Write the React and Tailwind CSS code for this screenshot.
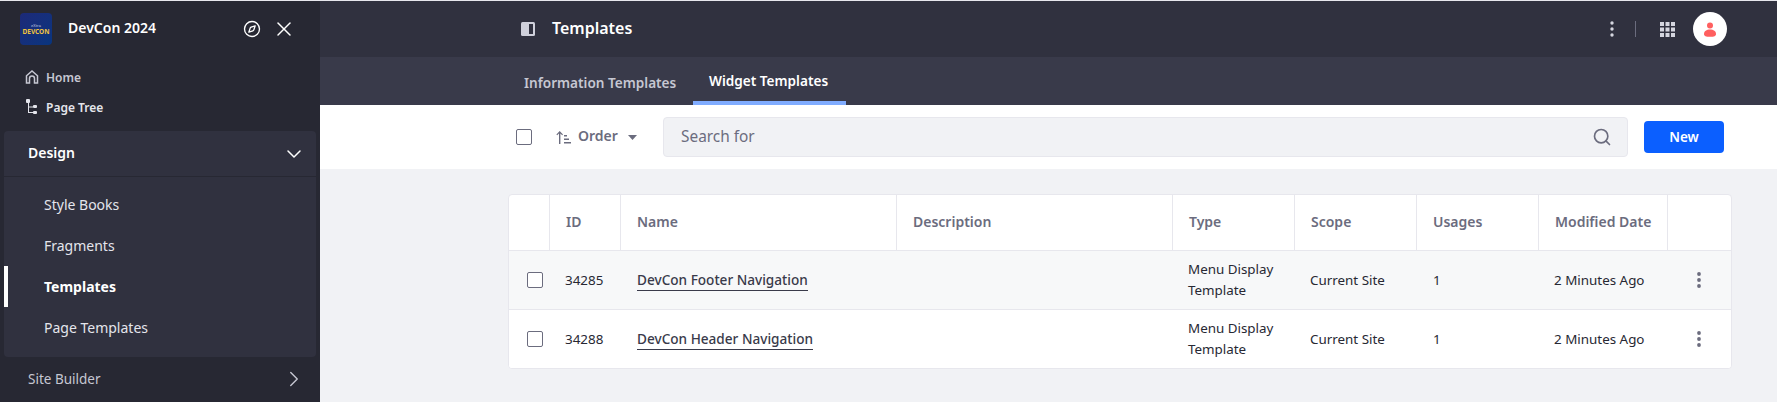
import { X, Compass, ChevronDown, ChevronRight, Search } from 'lucide-react';

const font = "font-['Noto_Sans',sans-serif]";

const columns = 'grid-cols-[41px_71px_276px_276px_122px_122px_122px_129px_63px]';

const rows = [
  { id: '34285', name: 'DevCon Footer Navigation', bg: 'bg-[#f7f8f9]', height: 'h-[59px] border-b border-[#e7e7ed]' },
  { id: '34288', name: 'DevCon Header Navigation', bg: 'bg-white', height: 'h-[58px]' },
];

function HomeIcon() {
  return (
    <svg width="14" height="14" viewBox="0 0 14 14" fill="none" stroke="#c6c7d2" strokeWidth="1.5">
      <path d="M1.500 13V5.800L7 1l5.500 4.800V13H9.500V8.500a2.500 2.500 0 0 0-5 0V13z" />
    </svg>
  );
}

function TreeIcon() {
  return (
    <svg width="12" height="16" viewBox="0 0 12 16" fill="#e4e5ec">
      <rect x="0" y="0" width="4" height="4" rx="1" />
      <rect x="7" y="6" width="4" height="3" rx="1" />
      <rect x="7" y="12" width="4" height="3" rx="1" />
      <path d="M2 4h1v3.500h4v1H3V13h4v1H2z" />
    </svg>
  );
}

function PanelIcon() {
  return (
    <svg width="14" height="14" viewBox="0 0 14 14">
      <rect x="0" y="0" width="14" height="14" rx="1.500" fill="#cfd0db" />
      <rect x="8" y="2" width="4" height="10" fill="#30313f" />
    </svg>
  );
}

function GridIcon() {
  return (
    <svg width="15" height="15" viewBox="0 0 15 15" fill="#d5d6df">
      {[0, 5.500, 11].map((y) =>
        [0, 5.500, 11].map((x) => <rect key={`${x}-${y}`} x={x} y={y} width="4" height="4" />)
      )}
    </svg>
  );
}

function OrderIcon() {
  return (
    <svg width="15" height="15" viewBox="0 0 15 15" fill="#6b6c7e">
      <path d="M3 14V3.500L1.200 5.300.400 4.500 3.700 1l3.300 3.500-.8.800L4.400 3.500V14z" />
      <rect x="8" y="5" width="3" height="1.500" />
      <rect x="8" y="8.500" width="5" height="1.500" />
      <rect x="8" y="12" width="7" height="1.500" />
    </svg>
  );
}

function Dots({ color, r }) {
  return (
    <svg width="4" height="16" viewBox="0 0 4 16" fill={color} className="block">
      <circle cx="2" cy="2" r={r} />
      <circle cx="2" cy="8" r={r} />
      <circle cx="2" cy="14" r={r} />
    </svg>
  );
}

function Checkbox() {
  return <span className="block w-4 h-4 rounded-[2px] border border-[#6b6c7e] bg-white" />;
}

function Sidebar() {
  return (
    <aside className="w-[320px] h-[401px] shrink-0 bg-[#272833] flex flex-col">
      <div className="h-[56px] flex items-center pl-[20px] pr-[24px]">
        <div className="w-8 h-8 rounded-[4px] bg-gradient-to-br from-[#1c2a78] to-[#07357f] flex flex-col items-center justify-center">
          <span className="text-[4px] leading-[5px] text-[#c5cbe0]">eXtra</span>
          <span className="text-[6.500px] leading-[7px] font-bold text-[#f0c33c]">DEVCON</span>
        </div>
        <span className="ml-4 pb-[2px] text-sm font-semibold text-white">DevCon 2024</span>
        <Compass size={18} color="#fff" strokeWidth={1.800} className="ml-auto" />
        <X size={24} color="#fff" strokeWidth={1.500} className="ml-[11px]" />
      </div>
      <div className="pl-[25px] mt-[5px] flex items-center h-[30px] gap-[7px] text-xs font-semibold text-[#c6c7d2]">
        <HomeIcon />
        <span className="pt-[2px]">Home</span>
      </div>
      <div className="pl-[26px] flex items-center h-[30px] gap-[8px] text-xs font-semibold text-[#e4e5ec]">
        <TreeIcon />
        <span className="pt-[2px]">Page Tree</span>
      </div>
      <div className="mt-[9px] mx-[4px] w-[312px] h-[226px] rounded-[4px] bg-[#30313f]">
        <div className="h-[46px] flex items-center justify-between pl-[24px] pr-[10px] border-b border-[#272833] text-sm font-semibold text-white">
          <span className="pb-[2px]">Design</span>
          <ChevronDown size={24} color="#fff" strokeWidth={1.500} />
        </div>
        <nav className="pt-[7px] text-sm text-[#e4e5ec]">
          <div className="h-[41px] flex items-center pl-[40px]">Style Books</div>
          <div className="h-[41px] flex items-center pl-[40px]">Fragments</div>
          <div className="h-[41px] flex items-center pl-[36px] border-l-4 border-white font-bold text-white">Templates</div>
          <div className="h-[41px] flex items-center pl-[40px]">Page Templates</div>
        </nav>
      </div>
      <div className="flex items-center justify-between h-[44px] pl-[28px] pr-[13px] text-[13.500px] text-[#c6c7d2]">
        <span>Site Builder</span>
        <ChevronRight size={26} color="#c6c7d2" strokeWidth={1.300} />
      </div>
    </aside>
  );
}

function Header() {
  return (
    <>
      <div className="h-[56px] bg-[#30313f] flex items-center pl-[201px] pr-[50px]">
        <PanelIcon />
        <span className="ml-[17px] pb-[2px] text-base font-semibold text-white">Templates</span>
        <span className="ml-auto"><Dots color="#d5d6df" r={1.700} /></span>
        <span className="ml-[21px] w-px h-4 bg-[#6b6c7e]" />
        <span className="ml-[24px]"><GridIcon /></span>
        <span className="ml-[18px] w-[34px] h-[34px] rounded-full bg-white flex items-center justify-center">
          <svg width="14" height="15" viewBox="0 0 14 15" fill="#ff5f5f">
            <circle cx="7" cy="3.500" r="3" />
            <path d="M1 12c0-3 2.500-4.500 6-4.500s6 1.500 6 4.500c0 2-1.800 2.800-6 2.800S1 14 1 12z" />
          </svg>
        </span>
      </div>
      <div className="h-[48px] bg-[#393a4a] flex pl-[188px] text-[13.600px] font-semibold">
        <div className="w-[185px] pl-[16px] pt-[4px] flex items-center text-[#c6c7d2] whitespace-nowrap">Information Templates</div>
        <div className="w-[153px] pl-[16px] pt-[4px] flex items-center text-white border-b-4 border-[#80acff] whitespace-nowrap">Widget Templates</div>
      </div>
    </>
  );
}

function Toolbar() {
  return (
    <div className="h-[64px] bg-white flex items-center pl-[196px]">
      <Checkbox />
      <span className="ml-[24px]"><OrderIcon /></span>
      <span className="ml-[7px] w-[39px] pb-[2px] text-sm font-semibold text-[#6b6c7e]">Order</span>
      <svg className="ml-[11px]" width="9" height="5" viewBox="0 0 9 5" fill="#6b6c7e"><path d="M0 0h9L4.500 5z" /></svg>
      <div className="ml-[26px] w-[965px] h-10 rounded-[4px] bg-[#f1f2f5] border border-[#e7e7ed] flex items-center justify-between pl-[17px] pr-[15px] text-[15.400px] text-[#6b6c7e]">
        <span>Search for</span>
        <Search size={20} color="#6b6c7e" strokeWidth={2} />
      </div>
      <button className="ml-[16px] w-20 h-8 rounded-[4px] bg-[#0b5fff] text-[13.500px] font-semibold text-white">New</button>
    </div>
  );
}

function Table() {
  const head = ['', 'ID', 'Name', 'Description', 'Type', 'Scope', 'Usages', 'Modified Date', ''];
  return (
    <div className="mt-[25px] ml-[188px] w-[1224px] rounded-[4px] border border-[#e7e7ed] bg-white overflow-hidden">
      <div className={`grid ${columns} h-[56px] border-b border-[#e7e7ed]`}>
        {head.map((label, i) => (
          <div key={i} className={`flex items-center pl-[16px] pb-[2px] text-sm font-semibold text-[#6b6c7e] ${i < 8 ? 'border-r border-[#e7e7ed]' : ''}`}>
            {label}
          </div>
        ))}
      </div>
      {rows.map((row) => (
        <div key={row.id} className={`grid ${columns} items-center text-[13.400px] text-[#272833] ${row.height} ${row.bg}`}>
          <div className="pl-[18px]"><Checkbox /></div>
          <div className="pl-[15px]">{row.id}</div>
          <div className="pl-[16px] text-[13.600px] font-medium text-[#393a4a]">
            <span className="border-b border-[#393a4a] pb-[1px]">{row.name}</span>
          </div>
          <div />
          <div className="pl-[15px] leading-[21px]">Menu Display<br />Template</div>
          <div className="pl-[15px]">Current Site</div>
          <div className="pl-[16px]">1</div>
          <div className="pl-[15px]">2 Minutes Ago</div>
          <div className="pl-[29px]"><Dots color="#6b6c7e" r={1.900} /></div>
        </div>
      ))}
    </div>
  );
}

export default function App() {
  return (
    <div className={`${font} w-[1777px] h-[402px] bg-[#f1f2f5] overflow-hidden`}>
      <div className="h-px bg-[#e7e7ed]" />
      <div className="flex">
        <Sidebar />
        <main className="flex-1 min-w-0">
          <Header />
          <Toolbar />
          <Table />
        </main>
      </div>
    </div>
  );
}
